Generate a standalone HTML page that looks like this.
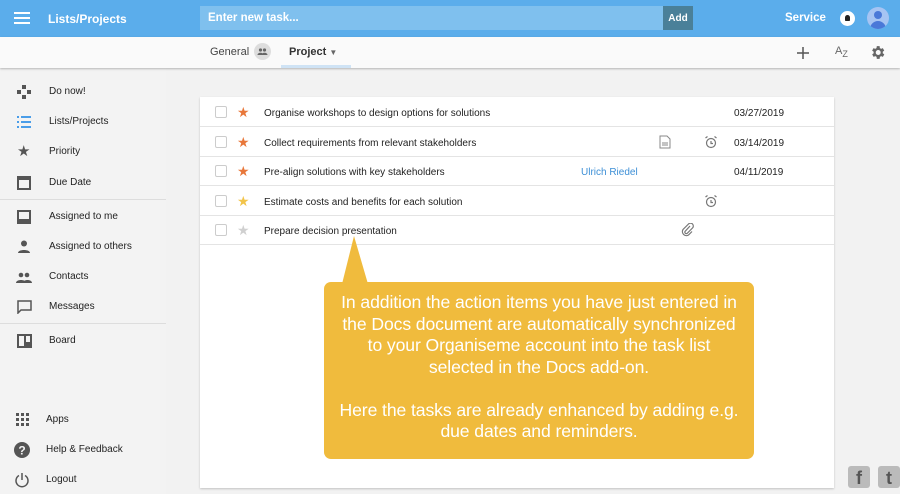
<!DOCTYPE html>
<html><head><style>
*{margin:0;padding:0;box-sizing:border-box}
body{width:900px;height:494px;overflow:hidden;font-family:"Liberation Sans",sans-serif;background:#f2f2f2;position:relative;font-size:10px;color:#222}
.hdr{position:absolute;left:0;top:0;width:900px;height:37px;background:#5badeb}
.sub{position:absolute;left:0;top:37px;width:900px;height:31px;background:#fafafa;box-shadow:0 1px 2px rgba(0,0,0,.25);z-index:2}
.side{position:absolute;left:0;top:68px;width:166px;height:426px;background:#f3f3f3}
.it{position:absolute;left:0;width:166px;height:20px;line-height:20px;font-size:10px;color:#222}
.it .ic{position:absolute;left:16px;top:3px;width:16px;height:14px}
.it span{position:absolute;left:49px}
.sep{position:absolute;left:0;width:166px;height:1px;background:#ddd}
.card{position:absolute;left:200px;top:97px;width:634px;height:391px;background:#fff;box-shadow:0 1px 2px rgba(0,0,0,.2)}
.row{position:absolute;left:0;width:634px;height:30px;border-bottom:1px solid #e4e4e4;font-size:10px;line-height:31px}
.cb{position:absolute;left:15px;top:9px;width:12px;height:12px;border:1px solid #ccc;border-radius:2px}
.st{position:absolute;left:37px;top:0;font-size:14px}
.tx{position:absolute;left:64px;top:1px}
.dt{position:absolute;left:534px;top:1px}
.ico{position:absolute;top:8px}
.call{position:absolute;left:324px;top:282px;width:430px;height:177px;background:#f0bb3d;border-radius:7px;color:#fff;font-size:17.6px;line-height:21.5px;text-align:center;padding-top:10px;letter-spacing:-0.1px}
</style></head><body>
<div class="hdr">
<div style="position:absolute;left:14px;top:12px;width:16px;height:2px;background:#fff;box-shadow:0 5px #fff,0 10px #fff"></div>
<div style="position:absolute;left:48px;top:12px;color:#fff;font-size:12px;font-weight:bold">Lists/Projects</div>
<div style="position:absolute;left:200px;top:6px;width:463px;height:24px;background:#7fc0ee;color:#fff;font-size:11.5px;font-weight:bold;line-height:25px;padding-left:8px">Enter new task...</div>
<div style="position:absolute;left:663px;top:6px;width:30px;height:24px;background:#4a8099;color:#fff;font-size:10px;font-weight:bold;line-height:25px;text-align:center">Add</div>
<div style="position:absolute;left:785px;top:12px;color:#fff;font-size:11.5px;font-weight:bold">Service</div>
<div style="position:absolute;left:840px;top:11px;width:15px;height:15px;border-radius:50%;background:#fff"><div style="position:absolute;left:5px;top:4px;width:5px;height:6px;background:#222;border-radius:3px 3px 1px 1px"></div></div>
<div style="position:absolute;left:867px;top:7px;width:22px;height:22px;border-radius:50%;background:#a6c4f3;overflow:hidden"><div style="position:absolute;left:7px;top:4px;width:8px;height:8px;border-radius:50%;background:#4a78d8"></div><div style="position:absolute;left:3px;top:14px;width:16px;height:10px;border-radius:8px 8px 0 0;background:#4a78d8"></div></div>
</div>
<div class="sub">
<div style="position:absolute;left:210px;top:9px;font-size:11px;color:#444">General</div>
<div style="position:absolute;left:254px;top:6px;width:17px;height:17px;border-radius:50%;background:#ddd"><svg width="17" height="17" viewBox="0 0 17 17"><circle cx="6.5" cy="7" r="1.6" fill="#666"/><circle cx="10.5" cy="7" r="1.6" fill="#666"/><path d="M3.5 12c0-3 6-3 6 0zM7.5 12c0-3 6-3 6 0z" fill="#666"/></svg></div>
<div style="position:absolute;left:289px;top:9px;font-size:11px;font-weight:bold;color:#333">Project <span style="font-size:8px;color:#666">▼</span></div>
<div style="position:absolute;left:281px;top:28px;width:70px;height:3px;background:#cfe3f5"></div>
<svg style="position:absolute;left:796px;top:9px" width="14" height="14"><path d="M7 1v12M1 7h12" stroke="#555" stroke-width="1.5"/></svg>
<div style="position:absolute;left:835px;top:8px;font-size:11px;color:#666">A<sub style="font-size:9px">Z</sub></div>
<svg style="position:absolute;left:869px;top:7px" width="17" height="17" viewBox="0 0 24 24"><path fill="#666" d="M19.4 13a7.5 7.5 0 0 0 0-2l2.1-1.6-2-3.5-2.5 1a7 7 0 0 0-1.7-1L15 3h-4l-.4 2.9a7 7 0 0 0-1.7 1l-2.5-1-2 3.5L6.6 11a7.5 7.5 0 0 0 0 2l-2.1 1.6 2 3.5 2.5-1a7 7 0 0 0 1.7 1L11 21h4l.4-2.9a7 7 0 0 0 1.7-1l2.5 1 2-3.5zM13 15.5a3.5 3.5 0 1 1 0-7 3.5 3.5 0 0 1 0 7z"/></svg>
</div>
<div class="side">
<div class="it" style="top:14px"><svg class="ic" viewBox="0 0 16 14"><rect x="6" y="0" width="4" height="4" fill="#555"/><rect x="1" y="5" width="4" height="4" fill="#555"/><rect x="11" y="5" width="4" height="4" fill="#555"/><rect x="6" y="10" width="4" height="4" fill="#555"/></svg><span>Do now!</span></div>
<div class="it" style="top:44px"><svg class="ic" viewBox="0 0 16 14"><g fill="#4a9de8"><rect x="1" y="1" width="2" height="2"/><rect x="5" y="1" width="10" height="2"/><rect x="1" y="6" width="2" height="2"/><rect x="5" y="6" width="10" height="2"/><rect x="1" y="11" width="2" height="2"/><rect x="5" y="11" width="10" height="2"/></g></svg><span>Lists/Projects</span></div>
<div class="it" style="top:74px"><span style="left:17px;font-size:15px;color:#555">★</span><span>Priority</span></div>
<div class="it" style="top:105px"><svg class="ic" viewBox="0 0 16 14"><rect x="2" y="1" width="12" height="12" fill="none" stroke="#555" stroke-width="2"/><rect x="2" y="1" width="12" height="3" fill="#555"/></svg><span>Due Date</span></div>
<div class="sep" style="top:131px"></div>
<div class="it" style="top:139px"><svg class="ic" viewBox="0 0 16 14"><rect x="2" y="1" width="12" height="12" fill="none" stroke="#555" stroke-width="2"/><rect x="2" y="9" width="12" height="4" fill="#555"/></svg><span>Assigned to me</span></div>
<div class="it" style="top:169px"><svg class="ic" viewBox="0 0 16 14"><circle cx="8" cy="3.5" r="3" fill="#555"/><path d="M2 13c0-4 12-4 12 0z" fill="#555"/></svg><span>Assigned to others</span></div>
<div class="it" style="top:199px"><svg class="ic" viewBox="0 0 16 14"><circle cx="5" cy="5" r="2.3" fill="#555"/><circle cx="11" cy="5" r="2.3" fill="#555"/><path d="M0 13c0-4 10-4 10 0zM7 13c0-4 9-4 9 0z" fill="#555"/></svg><span>Contacts</span></div>
<div class="it" style="top:229px"><svg class="ic" viewBox="0 0 16 14"><path d="M2 1h13v9H5l-3 3z" fill="none" stroke="#555" stroke-width="1.5"/></svg><span>Messages</span></div>
<div class="sep" style="top:255px"></div>
<div class="it" style="top:263px"><svg class="ic" viewBox="0 0 16 14"><rect x="1" y="0" width="15" height="14" fill="#555"/><rect x="3" y="2" width="5" height="10" fill="#f3f3f3"/><rect x="10" y="2" width="4" height="6" fill="#f3f3f3"/></svg><span>Board</span></div>
<div class="it" style="top:342px"><svg class="ic" viewBox="0 0 16 14"><g fill="#555"><rect x="0" y="0" width="3" height="3"/><rect x="5" y="0" width="3" height="3"/><rect x="10" y="0" width="3" height="3"/><rect x="0" y="5" width="3" height="3"/><rect x="5" y="5" width="3" height="3"/><rect x="10" y="5" width="3" height="3"/><rect x="0" y="10" width="3" height="3"/><rect x="5" y="10" width="3" height="3"/><rect x="10" y="10" width="3" height="3"/></g></svg><span style="left:46px">Apps</span></div>
<div class="it" style="top:372px"><svg class="ic" viewBox="0 0 16 16" style="width:16px;height:16px;top:2px;left:14px"><circle cx="8" cy="8" r="8" fill="#555"/><text x="8" y="12.5" font-size="12" font-weight="bold" fill="#f3f3f3" text-anchor="middle" font-family="Liberation Sans">?</text></svg><span style="left:46px">Help &amp; Feedback</span></div>
<div class="it" style="top:402px"><svg class="ic" viewBox="0 0 16 16" style="width:16px;height:16px;top:2px;left:14px"><path d="M5 3.5A6 6 0 1 0 11 3.5" fill="none" stroke="#555" stroke-width="1.5"/><line x1="8" y1="1" x2="8" y2="8" stroke="#555" stroke-width="1.5"/></svg><span style="left:46px">Logout</span></div>
</div>
<div class="card">
<div class="row" style="top:0"><div class="cb"></div><div class="st" style="color:#e8773a">★</div><div class="tx">Organise workshops to design options for solutions</div><div class="dt">03/27/2019</div></div>
<div class="row" style="top:30px"><div class="cb"></div><div class="st" style="color:#e8773a">★</div><div class="tx">Collect requirements from relevant stakeholders</div>
<svg class="ico" style="left:459px" width="12" height="14" viewBox="0 0 12 14"><path d="M1 1h7l3 3v9H1z" fill="none" stroke="#888"/><path d="M3 8h6M3 10h6" stroke="#888"/></svg>
<svg class="ico" style="left:504px" width="14" height="14" viewBox="0 0 14 14"><circle cx="7" cy="8" r="4.5" fill="none" stroke="#777" stroke-width="1.2"/><path d="M7 6v2.5h2M1.5 3l2-1.5M12.5 3l-2-1.5" stroke="#777" stroke-width="1.2" fill="none"/></svg>
<div class="dt">03/14/2019</div></div>
<div class="row" style="top:59px"><div class="cb"></div><div class="st" style="color:#e8773a">★</div><div class="tx">Pre-align solutions with key stakeholders</div><div style="position:absolute;left:381px;top:1px;color:#3d8fd6">Ulrich Riedel</div><div class="dt">04/11/2019</div></div>
<div class="row" style="top:89px"><div class="cb"></div><div class="st" style="color:#f2c44a">★</div><div class="tx">Estimate costs and benefits for each solution</div>
<svg class="ico" style="left:504px" width="14" height="14" viewBox="0 0 14 14"><circle cx="7" cy="8" r="4.5" fill="none" stroke="#777" stroke-width="1.2"/><path d="M7 6v2.5h2M1.5 3l2-1.5M12.5 3l-2-1.5" stroke="#777" stroke-width="1.2" fill="none"/></svg></div>
<div class="row" style="top:118px"><div class="cb"></div><div class="st" style="color:#d0d0d0">★</div><div class="tx">Prepare decision presentation</div>
<svg class="ico" style="left:481px" width="14" height="14" viewBox="0 0 14 14"><path d="M9 3L4 8.5a1.5 1.5 0 0 0 2 2L11.5 5a2.8 2.8 0 0 0-4-4L2 6.5a4 4 0 0 0 5.5 5.5L11 8.5" fill="none" stroke="#777" stroke-width="1.2"/></svg></div>
</div>
<svg style="position:absolute;left:338px;top:234px" width="34" height="50"><path d="M16 2L4 50H30z" fill="#f0bb3d"/></svg>
<div class="call">In addition the action items you have just entered in<br>the Docs document are automatically synchronized<br>to your Organiseme account into the task list<br>selected in the Docs add-on.<br><br>Here the tasks are already enhanced by adding e.g.<br>due dates and reminders.</div>
<div style="position:absolute;left:848px;top:466px;width:22px;height:22px;background:#bbb;border-radius:3px;color:#555;font-weight:bold;font-size:18px;text-align:center;line-height:24px">f</div>
<div style="position:absolute;left:878px;top:466px;width:22px;height:22px;background:#bbb;border-radius:3px;color:#555;font-weight:bold;font-size:18px;text-align:center;line-height:24px">t</div>
</body></html>
